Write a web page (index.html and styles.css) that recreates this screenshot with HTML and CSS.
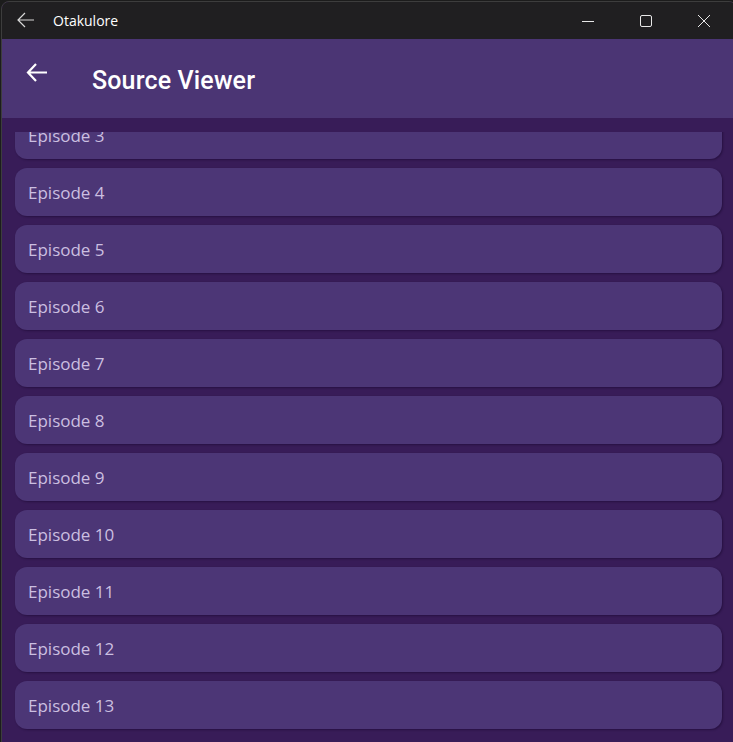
FILE: index.html
```html
<!DOCTYPE html>
<html>
<head>
<meta charset="utf-8">
<link rel="stylesheet" href="styles.css">
</head>
<body>
<div class="window">
  <div class="titlebar">
    <svg class="tb-back" width="18" height="16" viewBox="0 0 18 16"><path d="M8 1 L1 8 L8 15 M1 8 H17" fill="none" stroke="#d8d8d8" stroke-width="1.2"/></svg>
    <span class="tb-title">Otakulore</span>
    <div class="tb-controls">
      <svg width="58" height="38" viewBox="0 0 58 38"><path d="M23 19.5 H35" stroke="#e8e8e8" stroke-width="1"/></svg>
      <svg width="58" height="38" viewBox="0 0 58 38"><rect x="23.5" y="13.5" width="11" height="11" rx="1.5" fill="none" stroke="#e8e8e8" stroke-width="1"/></svg>
      <svg width="58" height="38" viewBox="0 0 58 38"><path d="M23 13 L35 25 M35 13 L23 25" stroke="#e8e8e8" stroke-width="1"/></svg>
    </div>
  </div>
  <div class="appbar">
    <svg class="ab-back" width="22" height="22" viewBox="0 0 22 22"><path d="M10 2 L2 10.5 L10 19 M2 10.5 H21" fill="none" stroke="#ffffff" stroke-width="2.2"/></svg>
    <h1 class="ab-title">Source Viewer</h1>
  </div>
  <div class="content">
    <div class="list">
      <div class="card">Episode 3</div>
      <div class="card">Episode 4</div>
      <div class="card">Episode 5</div>
      <div class="card">Episode 6</div>
      <div class="card">Episode 7</div>
      <div class="card">Episode 8</div>
      <div class="card">Episode 9</div>
      <div class="card">Episode 10</div>
      <div class="card">Episode 11</div>
      <div class="card">Episode 12</div>
      <div class="card">Episode 13</div>
    </div>
  </div>
</div>
</body>
</html>
```
FILE: styles.css
```css
html, body {
  margin: 0;
  padding: 0;
  height: 100%;
  overflow: hidden;
  background: #1c1c1c;
}
body {
  padding: 1px 0 0 1px;
  box-sizing: border-box;
}
.window {
  height: 742px;
  width: 734px;
  border: 1px solid #3d3d3d;
  border-radius: 8px 8px 0 0;
  overflow: hidden;
  background: #381c58;
  display: flex;
  flex-direction: column;
}
.titlebar {
  height: 37px;
  background: #201f21;
  display: flex;
  align-items: center;
  flex-shrink: 0;
}
.tb-back {
  margin-left: 15px;
  margin-top: -1px;
}
.tb-title {
  margin-left: 18px;
  font-family: "Open Sans", "Noto Sans", sans-serif;
  font-size: 14px;
  color: #ffffff;
  margin-top: -1px;
}
.tb-controls {
  margin-left: auto;
  display: flex;
  margin-right: 3px;
}
.tb-controls svg { display: block; }
.appbar {
  height: 79px;
  background: #4b3574;
  display: flex;
  align-items: center;
  flex-shrink: 0;
}
.ab-back {
  margin-left: 24px;
  margin-top: -12px;
}
.ab-title {
  margin: 3px 0 0 44px;
  font-family: Roboto, "Noto Sans", sans-serif;
  font-weight: 500;
  font-size: 25px;
  color: #ffffff;
  letter-spacing: 0.15px;
}
.content {
  flex: 1;
  margin-top: 14px;
  overflow: hidden;
}
.list {
  margin-top: -21px;
  padding: 0 14px 0 13px;
  display: flex;
  flex-direction: column;
  gap: 9px;
}
.card {
  height: 48px;
  flex-shrink: 0;
  border-radius: 12px;
  background: #4c3676;
  box-shadow: 1px 1px 2px rgba(20, 5, 40, 0.45);
  display: flex;
  align-items: center;
  padding-left: 13px;
  font-family: "Open Sans", "Noto Sans", sans-serif;
  font-size: 17px;
  color: #cbbfe0;
}
```
